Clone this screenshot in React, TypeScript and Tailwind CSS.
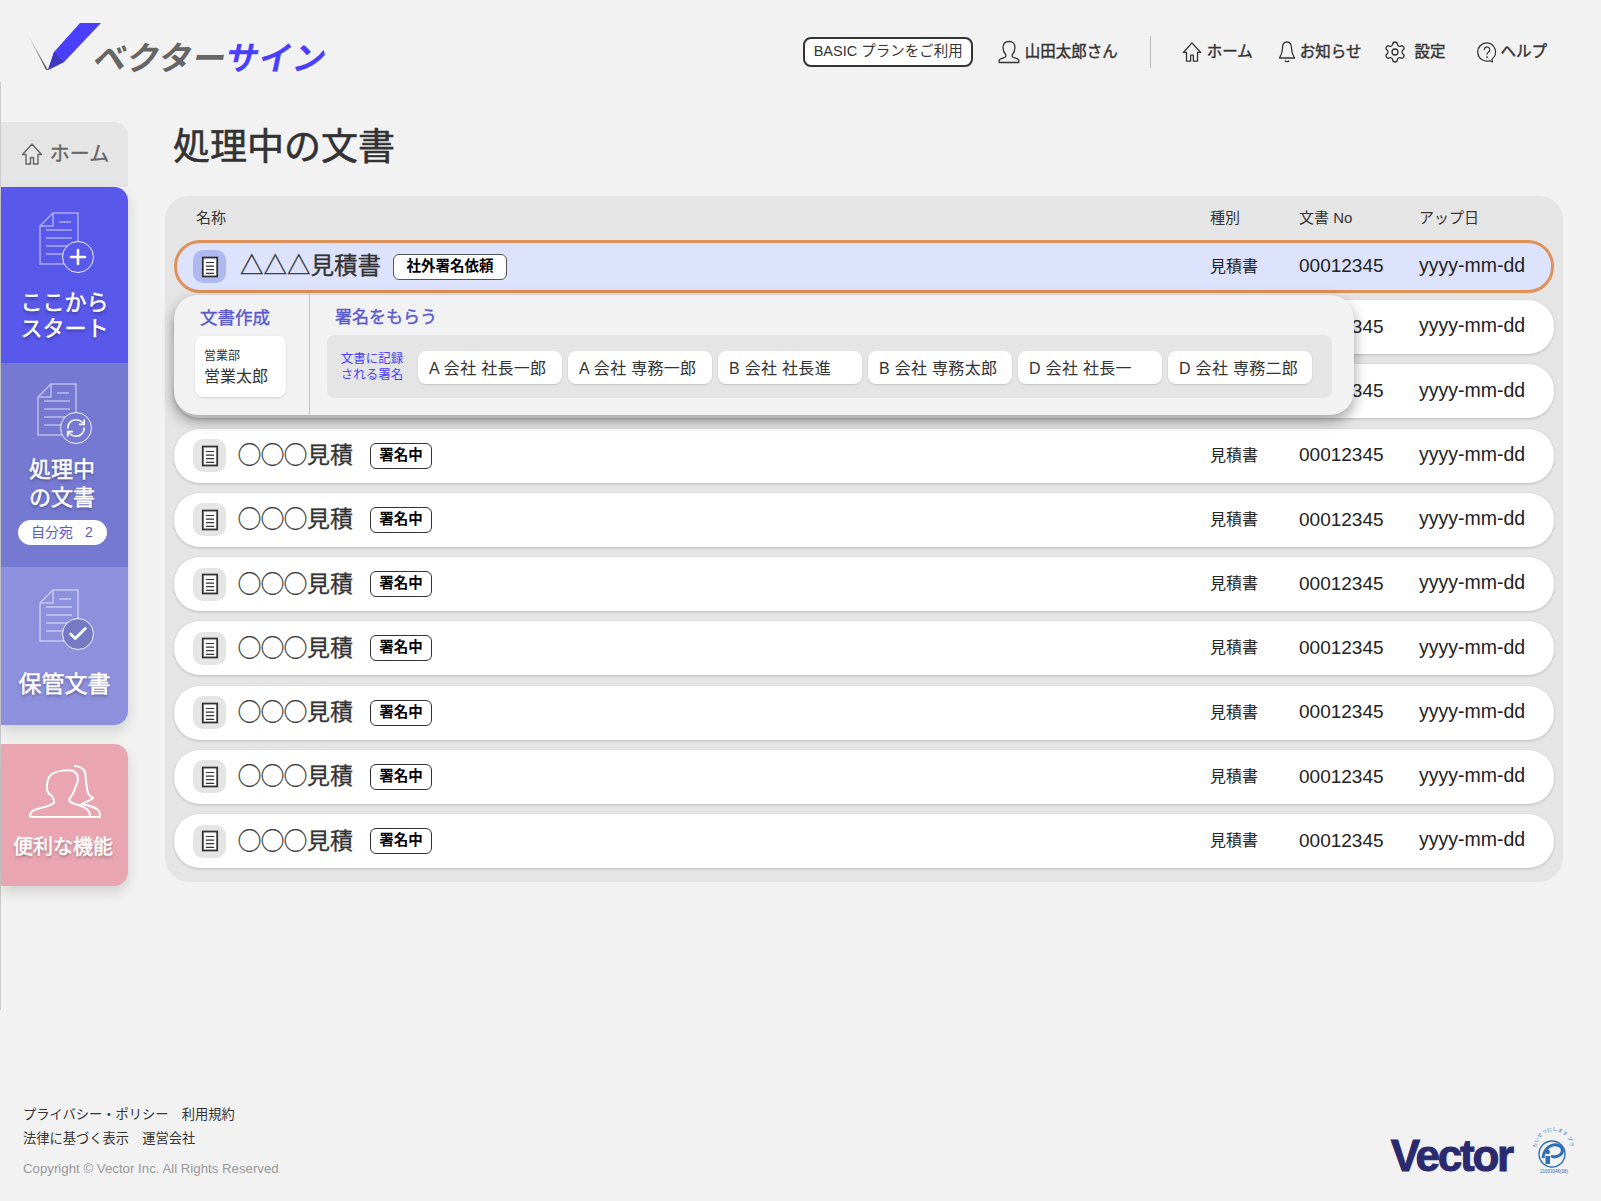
import type { ReactNode } from 'react'
import { Plus, RefreshCw, Settings, Check } from 'lucide-react'

const signers = [
  'A 会社 社長一郎',
  'A 会社 専務一郎',
  'B 会社 社長進',
  'B 会社 専務太郎',
  'D 会社 社長一',
  'D 会社 専務二郎',
]

function HomeIcon({ className }: { className?: string }) {
  return (
    <svg viewBox="0 0 24 24" className={className} fill="none" stroke="currentColor" strokeWidth="1.4" strokeLinejoin="round">
      <path d="M12 2L2.500 12.500H6V22h4.500v-6.500h3V22H18v-9.500h3.500L12 2z" />
    </svg>
  )
}

function UserIcon({ className }: { className?: string }) {
  return (
    <svg viewBox="0 0 24 24" className={className} fill="none" stroke="currentColor" strokeWidth="1.3" strokeLinejoin="round">
      <path d="M12 1.500c-4 0-6 2.400-6 6 0 3 1 5.200 2.800 7.200v1.800c0 1.200-5.600 1.500-6.600 3.500v2.500h19.600V20c-1-2-6.600-2.300-6.600-3.500v-1.800C17 12.700 18 10.500 18 7.500c0-3.600-2-6-6-6z" />
    </svg>
  )
}

function BellIcon({ className }: { className?: string }) {
  return (
    <svg viewBox="0 0 18 24" className={className} fill="none" stroke="currentColor" strokeWidth="1.3" strokeLinejoin="round">
      <path d="M9 2c-3 0-4.500 2.500-4.500 6 0 4-1 7-3 10h15c-2-3-3-6-3-10 0-3.500-1.500-6-4.500-6z" />
      <path d="M7 20.500c.4 1.400 3.600 1.400 4 0" />
    </svg>
  )
}

function HelpIcon({ className }: { className?: string }) {
  return (
    <svg viewBox="0 0 24 24" className={className} fill="none" stroke="currentColor" strokeWidth="1.3" strokeLinejoin="round">
      <path d="M12 2a10 10 0 1 0 3 19.500l3 1.500-.5-3.200A10 10 0 0 0 12 2z" />
      <path d="M9 9.500a3 3 0 1 1 4.800 2.400c-1 .8-1.800 1.300-1.800 2.600" strokeLinecap="round" />
      <path d="M12 17.500v.5" strokeLinecap="round" strokeWidth="1.800" />
    </svg>
  )
}

function DocGlyph({ className }: { className?: string }) {
  return (
    <svg viewBox="0 0 20 24" className={className} fill="none" stroke="currentColor">
      <rect x="2" y="1.500" width="16" height="21" strokeWidth="2" fill="#fff" />
      <path d="M5.500 7h9M5.500 11h9M5.500 15h9M5.500 19h9" strokeWidth="1.300" />
    </svg>
  )
}

// サイドバーの文書アイコン
function SideIcon({ fill, children }: { fill: string; children: ReactNode }) {
  return (
    <svg viewBox="0 0 60 62" className="w-[60px] h-[62px]" fill="none">
      <path
        d="M14 1h25v51H1V14L14 1zM14 1v13H1"
        stroke="#fff"
        strokeOpacity="0.5"
        strokeWidth="1.500"
      />
      <path
        d="M20 10h12M7 18h26M7 26h26M7 34h26M7 42h20"
        stroke="#fff"
        strokeOpacity="0.5"
        strokeWidth="1.500"
      />
      <circle cx="39" cy="45" r="15.500" fill={fill} stroke="#fff" strokeOpacity="0.9" />
      {children}
    </svg>
  )
}

function Row({ selected }: { selected?: boolean }) {
  return (
    <div
      className={
        selected
          ? 'h-[53px] mb-[7px] flex items-center rounded-[26px] border-[3px] border-[#df9158] bg-[#dee3fd] pl-[16px] pr-[25px]'
          : 'h-[54px] mb-[10.25px] flex items-center rounded-[26px] bg-white pl-[19px] pr-[28px] shadow-[0_1px_3px_rgba(0,0,0,0.18)]'
      }
    >
      <div
        className={`w-[33px] h-[33px] rounded-[10px] flex items-center justify-center text-[#333] ${
          selected ? 'bg-[#aeb9f0]' : 'bg-[#e5e5e5]'
        }`}
      >
        <DocGlyph className="w-[18px] h-[22px]" />
      </div>
      {selected ? (
        <>
          <span className="ml-[14px] text-[23.5px] font-normal [-webkit-text-stroke:0.3px_#333] text-[#333] leading-none">
            △△△見積書
          </span>
          <span className="ml-[12px] w-[114px] h-[26px] rounded-[6px] border border-[#555] bg-white flex items-center justify-center text-[14.5px] font-bold text-black">
            社外署名依頼
          </span>
        </>
      ) : (
        <>
          <span className="ml-[12px] text-[23px] font-normal [-webkit-text-stroke:0.3px_#333] text-[#333] leading-none">
            ◯◯◯見積
          </span>
          <span className="ml-[17px] w-[62px] h-[26px] rounded-[6px] border border-[#333] bg-white flex items-center justify-center text-[14.5px] font-bold text-black">
            署名中
          </span>
        </>
      )}
      <span className="ml-auto w-[89px] text-[16px] text-[#222]">見積書</span>
      <span className="w-[120px] text-[19px] text-[#222]">00012345</span>
      <span className="w-[107px] pb-[2px] text-[19.5px] text-[#222]">yyyy-mm-dd</span>
    </div>
  )
}

function Popover() {
  return (
    <div className="absolute left-[9px] top-[55px] w-[1180px] h-[120px] flex rounded-[24px] bg-[#f2f2f2] shadow-[0_6px_14px_rgba(0,0,0,0.38)]">
      <div className="w-[136px] border-r border-[#c4c4c4] pl-[21px] pt-[10px]">
        <div className="pl-[5px] text-[17.5px] font-normal [-webkit-text-stroke:0.4px_#5a5acb] leading-[26px] text-[#5a5acb]">文書作成</div>
        <div className="mt-[5px] w-[91px] h-[61px] rounded-[8px] bg-white pl-[9px] pt-[11px] shadow-[0_1px_2px_rgba(0,0,0,0.15)]">
          <div className="text-[12px] leading-[18px] text-[#333]">営業部</div>
          <div className="text-[16px] leading-[24px] text-[#333]">営業太郎</div>
        </div>
      </div>
      <div className="pl-[17px] pt-[10px]">
        <div className="pl-[8px] text-[17px] font-normal [-webkit-text-stroke:0.4px_#5a5acb] leading-[26px] text-[#5a5acb]">署名をもらう</div>
        <div className="mt-[4px] w-[1005px] h-[63px] rounded-[8px] bg-[#e5e5e5] flex items-center pl-[12px]">
          <div className="w-[66px] text-[12.5px] leading-[16px] text-[#4a3fff] text-center">
            文書に記録
            <br />
            される署名
          </div>
          <div className="ml-[13px] mt-[1px] flex gap-[6.5px]">
            {signers.map((name) => (
              <div
                key={name}
                className="w-[143.5px] h-[33px] rounded-[8px] bg-white flex items-center pl-[11px] pt-[3px] text-[16px] tracking-[0.3px] text-[#333] shadow-[0_1px_2px_rgba(0,0,0,0.15)]"
              >
                {name}
              </div>
            ))}
          </div>
        </div>
      </div>
    </div>
  )
}

function Logo() {
  return (
    <div className="flex items-end">
      <svg viewBox="0 0 80 54" className="w-[80px] h-[54px]">
        <defs>
          <linearGradient id="tick" x1="1" y1="1" x2="0" y2="0">
            <stop offset="0" stopColor="#555" />
            <stop offset="1" stopColor="#ddd" />
          </linearGradient>
        </defs>
        <path d="M0 10L21 47L19 47Z" fill="url(#tick)" />
        <path d="M53 0H74L37 39L21 47L27 29Z" fill="#4a3fff" />
        <path d="M27 29L37 39L21 47Z" fill="#3f37c0" />
      </svg>
      <div className="ml-[-13px] mb-[2px] text-[33px] font-bold leading-none tracking-[0.5px] -skew-x-12">
        <span className="text-[#666]">ベクター</span>
        <span className="text-[#4a3fff]">サイン</span>
      </div>
    </div>
  )
}

function NavLink({ icon, label, gap }: { icon: ReactNode; label: string; gap: string }) {
  return (
    <div className={`flex items-center ${gap} text-[15.5px] font-normal [-webkit-text-stroke:0.4px_#333] text-[#333]`}>
      {icon}
      {label}
    </div>
  )
}

const sideText = 'font-normal text-white [-webkit-text-stroke:0.5px_#fff] [text-shadow:0_2px_3px_rgba(0,0,0,0.35)]'

export default function App() {
  return (
    <div className="w-[1601px] h-[1201px] overflow-hidden flex flex-col bg-[#f2f2f2] font-['Liberation_Sans','Noto_Sans_CJK_JP',sans-serif]">
      {/* Header */}
      <header className="h-[82px] flex items-start pl-[27px] pt-[23px] shrink-0">
        <Logo />
        <div className="ml-auto mr-[54px] mt-[13px] flex items-center">
          <div className="w-[170px] h-[30px] rounded-[8px] border-2 border-[#333] bg-white flex items-center justify-center text-[14.5px] text-[#333]">
            BASIC プランをご利用
          </div>
          <div className="ml-[23.5px] w-[153px]">
            <NavLink icon={<UserIcon className="w-[24px] h-[24px]" />} label="山田太郎さん" gap="gap-[4px]" />
          </div>
          <div className="w-px h-[32px] bg-[#bbb]" />
          <div className="ml-[30px] flex items-center gap-[20px]">
            <NavLink icon={<HomeIcon className="w-[22px] h-[22px]" />} label="ホーム" gap="gap-[4px]" />
            <div className="ml-[5px]">
              <NavLink icon={<BellIcon className="w-[18px] h-[24px]" />} label="お知らせ" gap="gap-[4px]" />
            </div>
            <div className="ml-[2px]">
              <NavLink icon={<Settings className="w-[24px] h-[24px] stroke-[1.3]" />} label="設定" gap="gap-[7px]" />
            </div>
            <div className="ml-[11px]">
              <NavLink icon={<HelpIcon className="w-[22px] h-[22px]" />} label="ヘルプ" gap="gap-[2px]" />
            </div>
          </div>
        </div>
      </header>

      <div className="h-[928px] flex shrink-0">
        {/* Sidebar */}
        <aside className="w-[128px] border-l border-[#ccc] pt-[40px] shrink-0">
          <div className="h-[65px] rounded-tr-[14px] bg-[#e5e5e5] flex items-center justify-center gap-[6px] pb-[2px] text-[20px] font-normal [-webkit-text-stroke:0.3px_#666] text-[#666]">
            <HomeIcon className="w-[24px] h-[24px] text-[#666]" />
            ホーム
          </div>
          <div className="shadow-[0_6px_14px_rgba(0,0,0,0.14)] rounded-r-[14px]">
            <div className="h-[176px] rounded-tr-[14px] bg-[#5858ea] flex flex-col items-center pt-[25px]">
              <div className="ml-[8px]">
                <SideIcon fill="#5858ea">
                  <Plus x="27" y="33" width="24" height="24" stroke="#fff" strokeWidth="2.600" />
                </SideIcon>
              </div>
              <div className={`mt-[16px] text-center text-[22px] leading-[26px] ${sideText}`}>
                ここから
                <br />
                スタート
              </div>
            </div>
            <div className="h-[204px] bg-[#7679d1] flex flex-col items-center pt-[20px]">
              <div className="ml-[5px]">
                <SideIcon fill="#7679d1">
                  <RefreshCw x="28" y="34" width="22" height="22" stroke="#fff" strokeWidth="1.800" />
                </SideIcon>
              </div>
              <div className={`mt-[11px] -ml-[5px] text-center text-[22px] leading-[28px] ${sideText}`}>
                処理中
                <br />
                の文書
              </div>
              <div className="mt-[8px] -ml-[5px] w-[89px] h-[25px] rounded-full bg-white flex items-center justify-center gap-[12px] text-[14px] text-[#5a5acb]">
                <span>自分宛</span>
                <span>2</span>
              </div>
            </div>
            <div className="h-[158px] rounded-br-[14px] bg-[#8d90dc] flex flex-col items-center pt-[22px]">
              <div className="ml-[8px]">
                <SideIcon fill="#7679c4">
                  <Check x="28" y="34" width="22" height="22" stroke="#fff" strokeWidth="3" />
                </SideIcon>
              </div>
              <div className={`mt-[18px] text-[23px] leading-[30px] ${sideText}`}>
                保管文書
              </div>
            </div>
          </div>
          <div className="mt-[19px] h-[142px] rounded-r-[14px] bg-[#e9a6b2] flex flex-col items-center pt-[21px] shadow-[0_6px_14px_rgba(0,0,0,0.14)]">
            <svg viewBox="0 0 72 54" className="w-[72px] h-[54px]" fill="none" stroke="#fff" strokeWidth="2">
              <path d="M1 52c0-4 2-7 7-8 7-2 13-3 17-6 1-3-1-5-3-8-3-1-5-6-4-9 0-3 1-9 5-12 4-3 17-5 21-3 4 2 5 6 5 8 0 3-2 7-3 9 0 3-3 7-5 10-2 3 1 5 5 6 7 2 13 4 14 8 1 2 1 4 1 5H1z" />
              <path d="M45 1c4 0 9 2 11 6 1 5 1 15 3 21 1 3 4 4 5 5-3 3-8 4-11 6 5 1 14 3 17 7 1 2 1 4 1 6H59" />
            </svg>
            <div className={`mt-[13px] -ml-[3px] text-[20px] leading-[30px] ${sideText}`}>
              便利な機能
            </div>
          </div>
        </aside>

        {/* Main */}
        <main className="ml-[37px] w-[1398px] flex flex-col">
          <h1 className="mt-[40px] pl-[8px] h-[74px] text-[37px] leading-[52px] font-normal [-webkit-text-stroke:0.6px_#333] text-[#333]">
            処理中の文書
          </h1>
          <div className="rounded-[24px] bg-[#e5e5e5] pb-[4px]">
            <div className="h-[44px] flex items-center pl-[31px] pr-[37px] text-[15px] text-[#333]">
              <span>名称</span>
              <span className="ml-auto w-[89px]">種別</span>
              <span className="w-[120px] whitespace-nowrap">文書 No</span>
              <span className="w-[107px] whitespace-nowrap">アップ日</span>
            </div>
            <div className="relative px-[9px]">
              <Row selected />
              {Array.from({ length: 9 }).map((_, i) => (
                <Row key={i} />
              ))}
              <Popover />
            </div>
          </div>
        </main>
      </div>

      {/* Footer */}
      <footer className="flex-1 flex items-end justify-between pl-[23px] pr-[27px] pb-[23px]">
        <div>
          <div className="text-[13.25px] leading-[24px] text-[#333]">プライバシー・ポリシー　利用規約</div>
          <div className="text-[13.25px] leading-[24px] text-[#333]">法律に基づく表示　運営会社</div>
          <div className="mt-[9px] text-[13.25px] leading-[18px] text-[#999]">Copyright © Vector Inc. All Rights Reserved</div>
        </div>
        <div className="flex items-center gap-[20px]">
          <span className="mt-[7px] text-[44px] font-bold leading-none tracking-[-2.2px] text-[#2b2a6e] [-webkit-text-stroke:1px_#2b2a6e]">
            Vector
          </span>
          <svg viewBox="0 0 42 42" className="w-[42px] h-[42px] overflow-visible" fill="none">
            <circle cx="20" cy="22" r="13" stroke="#2f6fb5" strokeWidth="1.400" />
            <path d="M11 26c1-10 8-14 14-13 6 1 7 7 3 10-3 2-7 2-9 1" stroke="#2f6fb5" strokeWidth="3" />
            <rect x="13.500" y="24" width="4.500" height="8" fill="#2f6fb5" />
            <circle cx="15.800" cy="20" r="2.200" fill="#2f6fb5" />
            <path id="seal-arc" d="M5 16A16 16 0 0 1 38 15" />
            <text fontSize="5" fill="#2f6fb5">
              <textPath href="#seal-arc">たいせつにします プライバシー</textPath>
            </text>
            <text x="8" y="41" fontSize="4.500" fill="#2f6fb5">21003046(08)</text>
          </svg>
        </div>
      </footer>
    </div>
  )
}
